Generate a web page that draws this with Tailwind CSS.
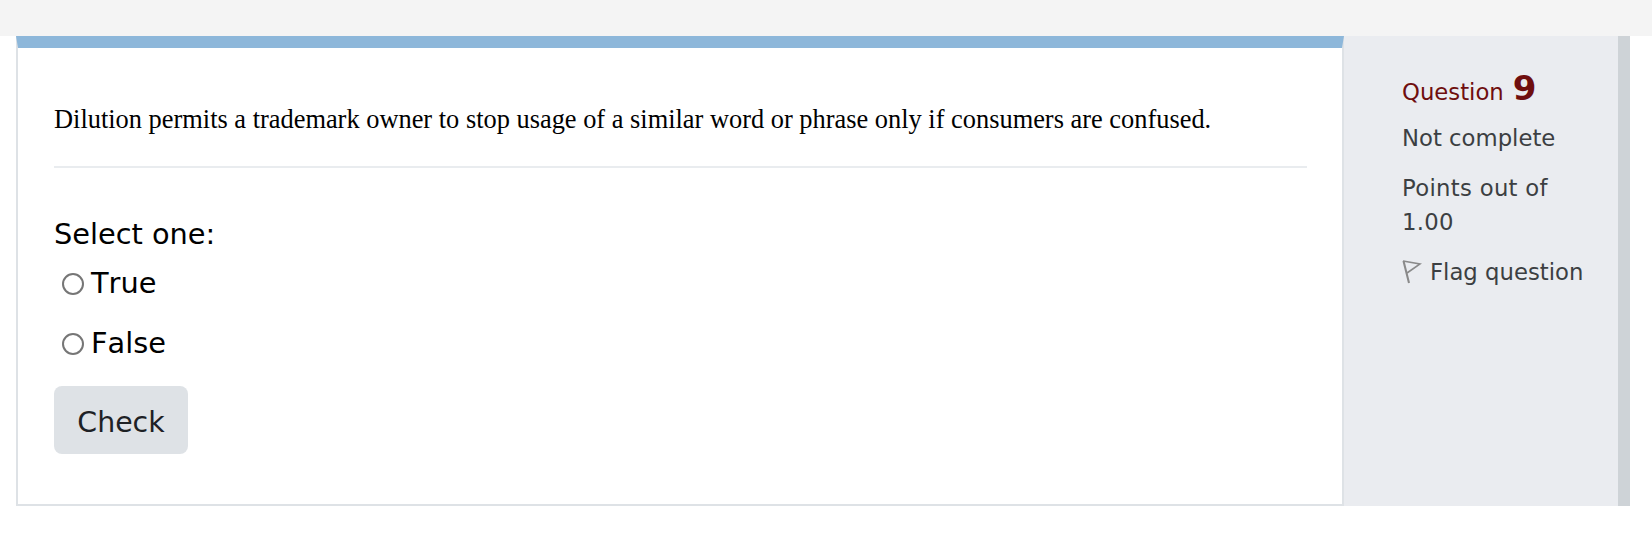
<!DOCTYPE html>
<html lang="en">
<head>
    <meta charset="UTF-8">
    <title>Question 9</title>
    <script src="https://cdn.jsdelivr.net/npm/@tailwindcss/browser@4"></script>
</head>
<body class="bg-white font-['DejaVu_Sans',sans-serif] overflow-hidden">
    <div class="h-[36px] bg-[#f4f4f4]"></div>
    <div class="flex ml-[16px] w-[1614px] h-[470px]">
        <!-- question content -->
        <div class="w-[1328px] border-x-2 border-b-2 border-t-[12px] border-x-[#dee2e6] border-b-[#dee2e6] border-t-[#8db7da]">
            <div class="px-[36px] pt-[53px]">
                <p class="font-['Liberation_Serif',serif] text-[26.4px] leading-[36px] text-black">Dilution permits a trademark owner to stop usage of a similar word or phrase only if consumers are confused.</p>
                <div class="h-[2px] bg-[#e9ecef] mt-[29px] w-[1253px]"></div>
                <div class="mt-[45px] text-[28.8px] leading-[42px] text-black">Select one:</div>
                <div class="flex items-center h-[42px] mt-[8px] ml-[8px] text-[28.8px] text-black [font-kerning:none]">
                    <span class="w-[22px] h-[22px] rounded-full border-2 border-[#767676] bg-white mr-[7px]"></span>True
                </div>
                <div class="flex items-center h-[42px] mt-[18px] ml-[8px] text-[28.8px] text-black [font-kerning:none]">
                    <span class="w-[22px] h-[22px] rounded-full border-2 border-[#767676] bg-white mr-[7px]"></span>False
                </div>
                <button class="mt-[21px] w-[134px] h-[68px] pt-[6px] bg-[#dee2e6] rounded-[8px] text-[28.4px] text-[#1d2125]">Check</button>
            </div>
        </div>
        <!-- question info -->
        <div class="w-[274px] bg-[#eaecf0] pl-[58px] pt-[35px] text-[22.75px] leading-[34px] text-[#3c3f42]">
            <div class="flex items-baseline text-[#6f0e0e] h-[36px]">Question <span class="font-bold text-[34px] ml-[9px]">9</span></div>
            <div class="mt-[14px]">Not complete</div>
            <div class="mt-[16px] tracking-[0.3px]">Points out of<br>1.00</div>
            <div class="mt-[16px] flex items-center">
                <svg class="w-[20px] h-[26px] mr-[8px]" viewBox="0 0 20 26" fill="none" stroke="#8a8a8a">
                    <path d="M1.5 2L7 24" stroke-width="2"/>
                    <path d="M1 2L18 5L5 14" stroke-width="1.6"/>
                </svg>
                Flag question
            </div>
        </div>
        <div class="w-[12px] bg-[#ced3d7]"></div>
    </div>
</body>
</html>
